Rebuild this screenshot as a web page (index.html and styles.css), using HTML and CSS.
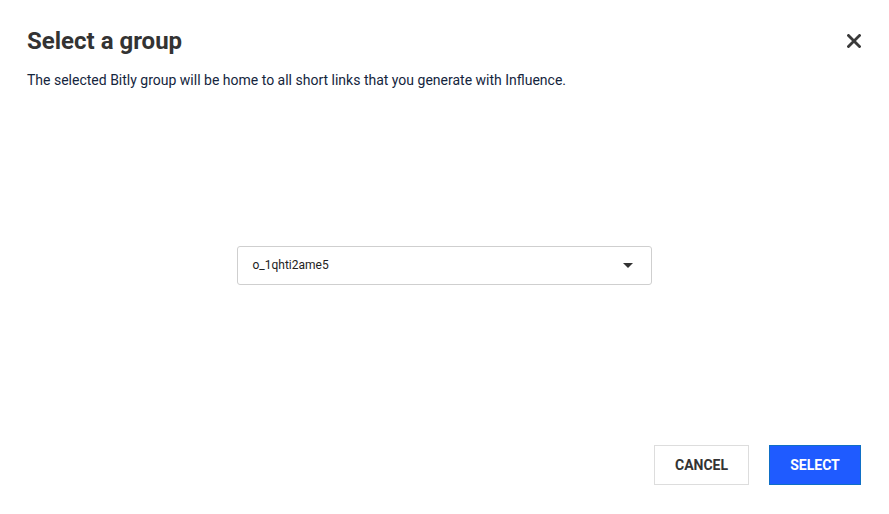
FILE: index.html
```html
<!DOCTYPE html>
<html lang="en">
<head>
    <meta charset="UTF-8">
    <meta name="viewport" content="width=device-width, initial-scale=1.0">
    <title>Select a group</title>
    <link rel="stylesheet" href="styles.css">
</head>
<body>
    <div class="dialog">
        <div class="dialog-header">
            <h2>Select a group</h2>
            <button class="close" type="button" aria-label="Close">
                <svg width="14" height="14" viewBox="0 0 14 14">
                    <path d="M1.5 1.5 L12.5 12.5 M12.5 1.5 L1.5 12.5" stroke="#3a3a3a" stroke-width="2.8" stroke-linecap="square"/>
                </svg>
            </button>
        </div>
        <p class="subtitle">The selected Bitly group will be home to all short links that you generate with Influence.</p>

        <div class="dialog-body">
            <div class="select-box">
                <span>o_1qhti2ame5</span>
                <span class="caret"></span>
            </div>
        </div>

        <div class="dialog-footer">
            <button type="button" class="btn btn-cancel">CANCEL</button>
            <button type="button" class="btn btn-select">SELECT</button>
        </div>
    </div>
</body>
</html>
```

FILE: styles.css
```css
body {
    margin: 0;
    font-family: Roboto, Arial, sans-serif;
    background-color: #ffffff;
    color: #333333;
}
.dialog {
    height: 514px;
    box-sizing: border-box;
    padding: 27px 28px 29px 27px;
    display: flex;
    flex-direction: column;
}
.dialog-header {
    display: flex;
    justify-content: space-between;
    align-items: center;
}
h2 {
    margin: 0;
    font-size: 24px;
    font-weight: bold;
    line-height: 28px;
    color: #333333;
}
.close {
    background: none;
    border: none;
    padding: 0;
    width: 14px;
    height: 14px;
    cursor: pointer;
}
.subtitle {
    margin: 16px 0 0;
    font-size: 14px;
    line-height: 18px;
    color: #14253d;
}
/* el select queda centrado en el espacio libre */
.dialog-body {
    flex: 1;
    display: flex;
    justify-content: center;
    align-items: center;
    padding-bottom: 4px;
}
.select-box {
    width: 415px;
    height: 39px;
    box-sizing: border-box;
    border: 1px solid #cfcfcf;
    border-radius: 3px;
    padding: 0 18px 0 15px;
    display: flex;
    justify-content: space-between;
    align-items: center;
    font-size: 12px;
    color: #222222;
}
.caret {
    width: 0;
    height: 0;
    border-left: 5px solid transparent;
    border-right: 5px solid transparent;
    border-top: 5px solid #333333;
}
.dialog-footer {
    display: flex;
    justify-content: flex-end;
    gap: 20px;
}
.btn {
    height: 40px;
    font-family: Roboto, Arial, sans-serif;
    font-size: 14px;
    font-weight: bold;
    cursor: pointer;
}
.btn-cancel {
    width: 95px;
    background-color: #ffffff;
    border: 1px solid #dddddd;
    color: #333333;
}
.btn-select {
    width: 92px;
    background-color: #1f5bff;
    border: 1px solid #0f6fc6;
    color: #ffffff;
}
```
